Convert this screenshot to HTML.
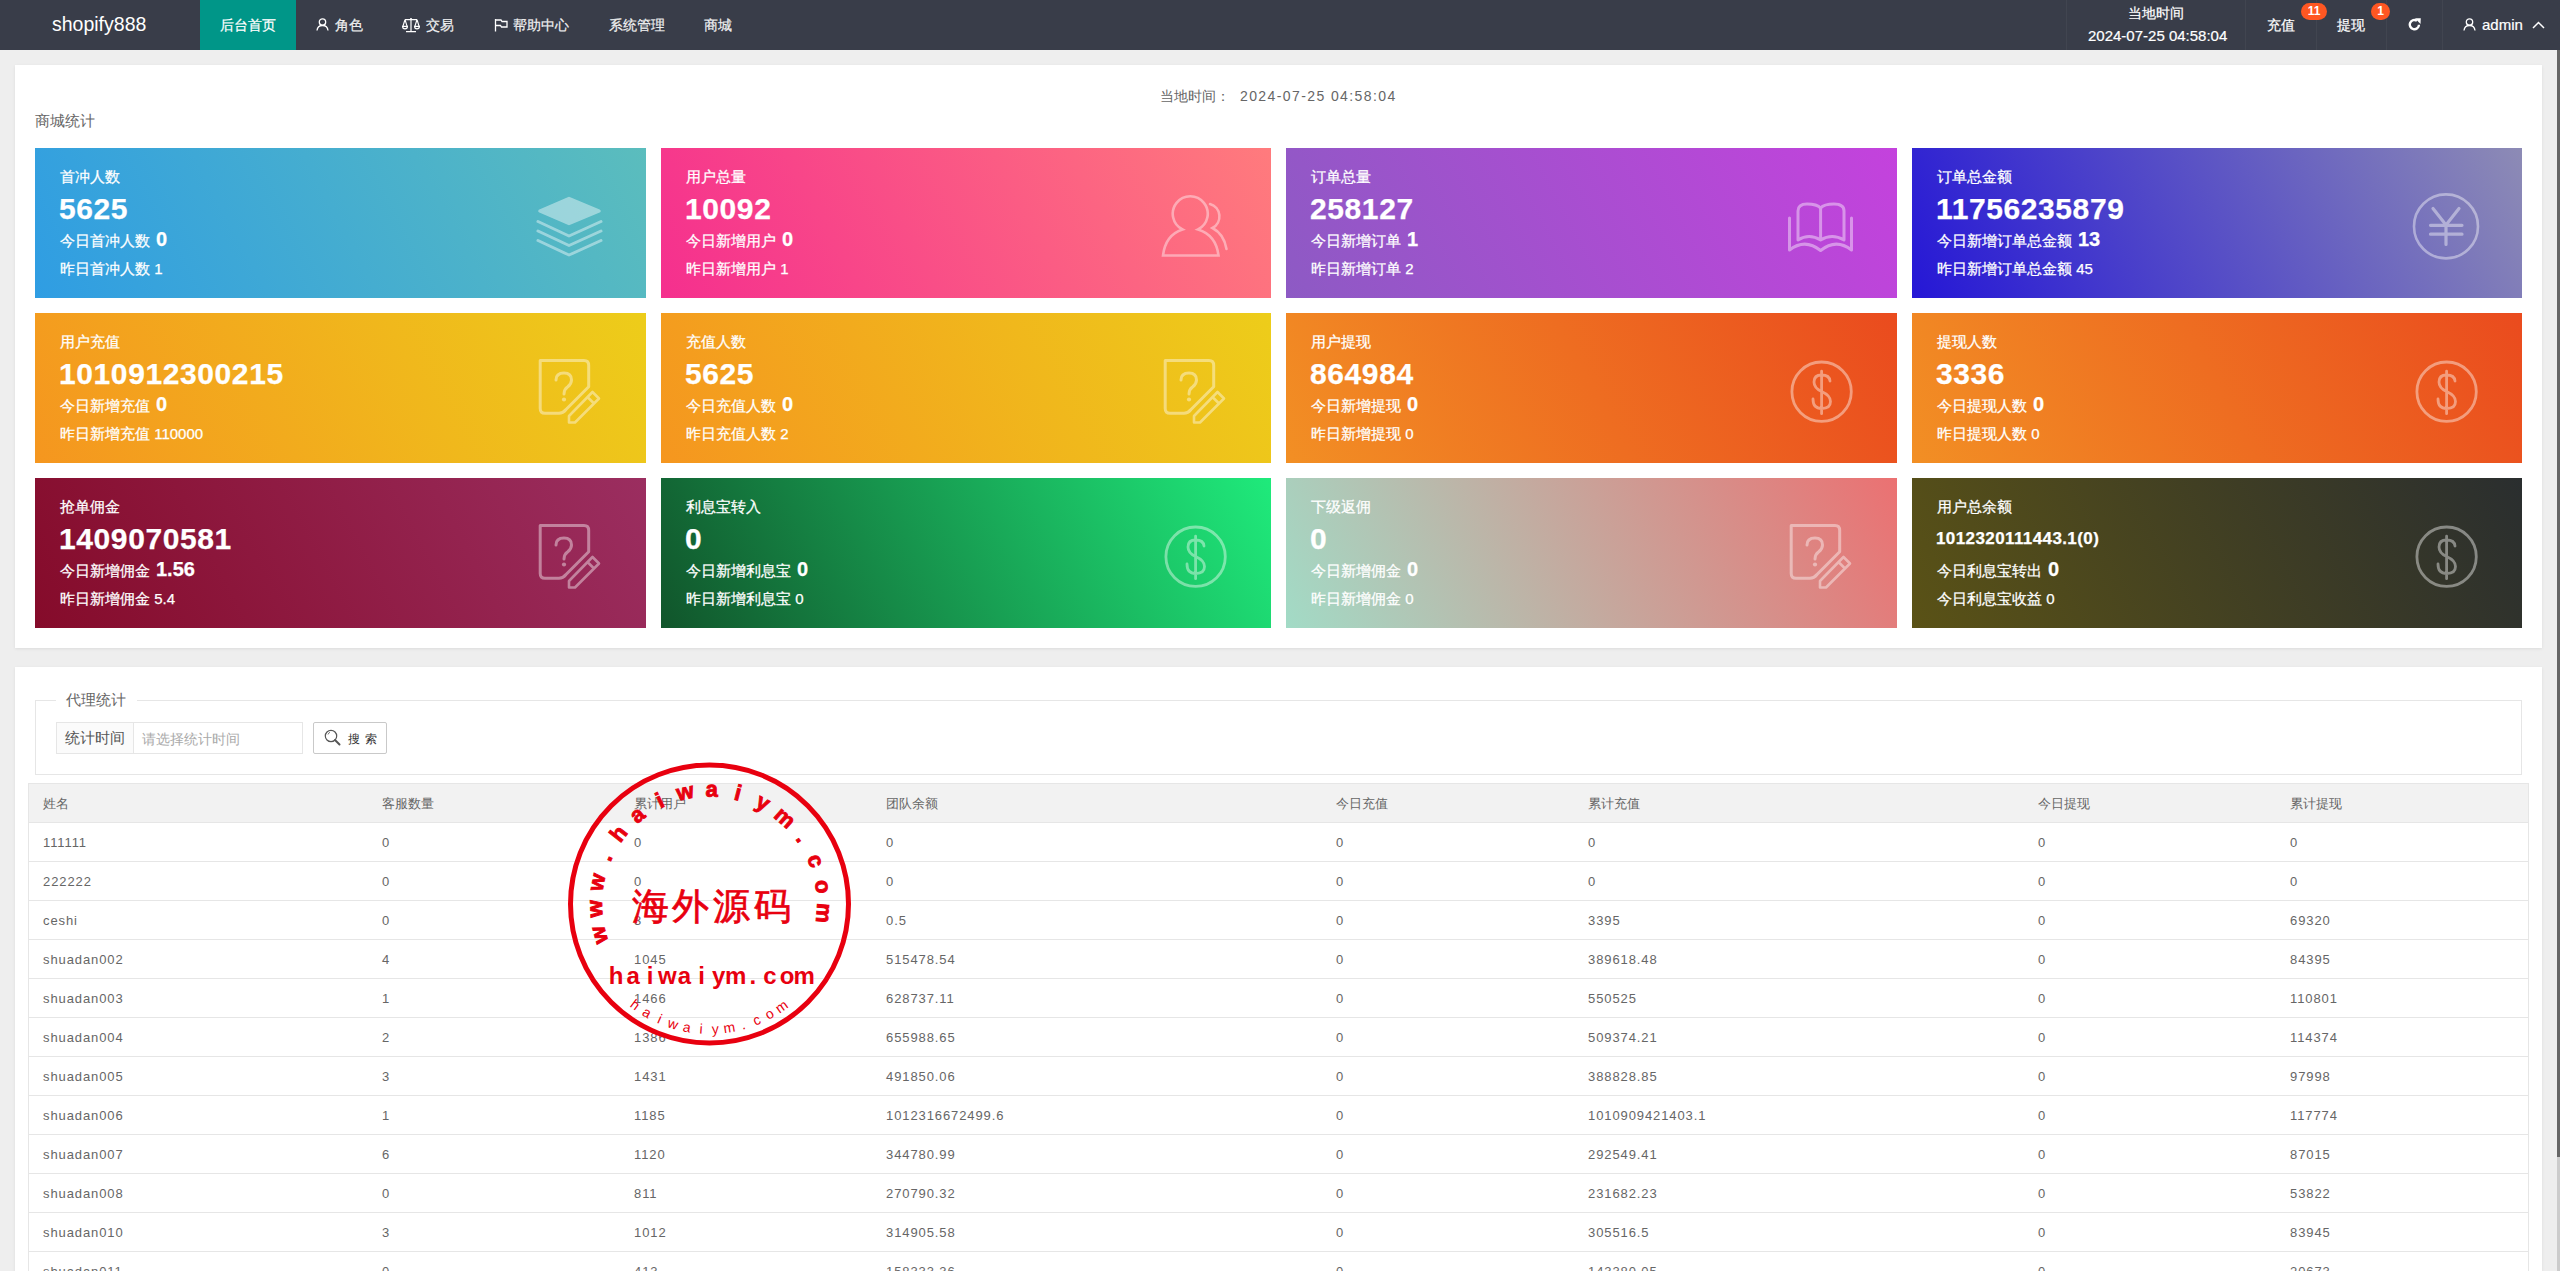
<!DOCTYPE html><html><head><meta charset='utf-8'><style>
*{box-sizing:border-box;margin:0;padding:0}
html,body{width:2560px;height:1271px;overflow:hidden}
body{background:#eeeeee;font-family:'Liberation Sans', sans-serif;font-size:14px;color:#666;position:relative}
.hdr{position:absolute;left:0;top:0;width:2560px;height:50px;background:#393d49;color:#fff;z-index:5;-webkit-text-stroke:0.2px #fff}
.logo{position:absolute;left:52px;top:11px;font-size:19.5px;line-height:26px;color:#fff;-webkit-text-stroke:0}
.nav{position:absolute;top:0;height:50px;line-height:50px;color:rgba(255,255,255,.9);white-space:nowrap}
.nav.on{background:#009688;color:#fff}
.sep{position:absolute;top:0;width:1px;height:50px;background:rgba(255,255,255,.045)}
.ab{position:absolute;white-space:nowrap}
.badge{position:absolute;height:17px;border-radius:9px;background:#ff5722;color:#fff;font-size:12px;font-weight:bold;line-height:17px;text-align:center;-webkit-text-stroke:0}
.panel{position:absolute;background:#fff;box-shadow:0 1px 3px rgba(0,0,0,.08)}
.card{position:absolute;width:611px;height:150px;color:#fff;overflow:hidden;-webkit-text-stroke:0.25px #fff}
.card .t{position:absolute;left:25px;top:19px;line-height:20px;font-size:15px}
.card .n{position:absolute;left:24px;top:41px;line-height:40px;font-size:30px;font-weight:bold;letter-spacing:0.6px}
.card .d{position:absolute;left:25px;top:78px;line-height:26px;font-size:15px}
.card .d b{font-size:20px;margin-left:6px}
.card .y{position:absolute;left:25px;top:111px;line-height:20px;font-size:15px}
.card svg{position:absolute}
.tbl{position:absolute;left:28px;top:783px;width:2502px;border-collapse:collapse}
.row{position:absolute;left:28px;width:2501px;height:39px;border:1px solid #e6e6e6;border-top:none;background:#fff}
.row.h{background:#f2f2f2;border-top:1px solid #e6e6e6}
.c{position:absolute;top:1px;line-height:38px;font-size:13px;color:#666;letter-spacing:0.9px;white-space:nowrap}
.row.h .c{letter-spacing:0;top:1px;font-size:13px}
</style></head><body>
<div class='hdr'>
<div class='logo'>shopify888</div>
<div class='nav on' style='left:200px;width:96px;text-align:center'>后台首页</div>
<svg width='13' height='13' viewBox='0 0 13 13' style='position:absolute;left:316px;top:18px'><circle cx='6.5' cy='4' r='3.2' fill='none' stroke='#fff' stroke-width='1.3'/><path d='M1 12.5 Q1.5 7.5 6.5 7.5 Q11.5 7.5 12 12.5' fill='none' stroke='#fff' stroke-width='1.3'/></svg>
<div class='nav' style='left:335px'>角色</div>
<svg width='18' height='15' viewBox='0 0 18 15' style='position:absolute;left:402px;top:18px'><g fill='none' stroke='#fff' stroke-width='1.2'><path d='M3 1.6H15M9 1.6V13.6M4 13.6H14M3 1.6L0.9 8.4M3 1.6L5.1 8.4M15 1.6L12.9 8.4M15 1.6L17.1 8.4'/><path d='M0.6 8.4H5.4A2.4 2.4 0 0 1 0.6 8.4ZM12.6 8.4H17.4A2.4 2.4 0 0 1 12.6 8.4Z'/></g><circle cx='9' cy='1.2' r='1.1' fill='#fff'/></svg>
<div class='nav' style='left:426px'>交易</div>
<svg width='14' height='14' viewBox='0 0 14 14' style='position:absolute;left:494px;top:18px'><path d='M1.5 1V13.5M1.5 2H7L8 3.5H13V9H7.5L6.5 7.5H1.5' fill='none' stroke='#fff' stroke-width='1.3'/></svg>
<div class='nav' style='left:513px'>帮助中心</div>
<div class='nav' style='left:609px'>系统管理</div>
<div class='nav' style='left:704px'>商城</div>
<div class='sep' style='left:2066px'></div>
<div class='sep' style='left:2245px'></div>
<div class='sep' style='left:2316px'></div>
<div class='sep' style='left:2386px'></div>
<div class='sep' style='left:2442px'></div>
<div class='ab' style='left:2128px;top:3px;line-height:20px;font-size:14px'>当地时间</div>
<div class='ab' style='left:2088px;top:26px;line-height:20px;font-size:15px'>2024-07-25 04:58:04</div>
<div class='ab' style='left:2267px;top:15px;line-height:20px'>充值</div>
<div class='badge' style='left:2301px;top:3px;width:26px'>11</div>
<div class='ab' style='left:2337px;top:15px;line-height:20px'>提现</div>
<div class='badge' style='left:2371px;top:3px;width:19px'>1</div>
<svg width='13' height='13' viewBox='0 0 13 13' style='position:absolute;left:2408px;top:18px'><path d='M11 6.8A4.6 4.6 0 1 1 9 2.8' fill='none' stroke='#fff' stroke-width='2.4'/><path d='M7 0.3L12.8 0.3L12.5 6Z' fill='#fff'/></svg>
<svg width='13' height='13' viewBox='0 0 13 13' style='position:absolute;left:2463px;top:18px'><circle cx='6.5' cy='4' r='3.2' fill='none' stroke='#fff' stroke-width='1.3'/><path d='M1 12.5 Q1.5 7.5 6.5 7.5 Q11.5 7.5 12 12.5' fill='none' stroke='#fff' stroke-width='1.3'/></svg>
<div class='ab' style='left:2482px;top:15px;line-height:20px;font-size:15px'>admin</div>
<svg width='13' height='8' viewBox='0 0 13 8' style='position:absolute;left:2532px;top:21px'><path d='M1 7L6.5 1.5L12 7' fill='none' stroke='#fff' stroke-width='1.5'/></svg>
</div>
<div class='ab' style='left:2557px;top:50px;width:3px;height:1107px;background:#666'></div>
<div class='ab' style='left:2557px;top:1157px;width:3px;height:114px;background:#ccc'></div>
<div class='panel' style='left:15px;top:65px;width:2527px;height:583px'></div>
<div class='ab' style='left:1160px;top:86px;line-height:20px;font-size:14px;color:#666'>当地时间：<span style='margin-left:10px;letter-spacing:1.4px'>2024-07-25 04:58:04</span></div>
<div class='ab' style='left:35px;top:111px;line-height:20px;font-size:15px;color:#666'>商城统计</div>
<div class='card' style='left:35px;top:148px;width:611px;background:linear-gradient(62deg,#2f9de3,#5bbdbd)'>
<div class='t'>首冲人数</div>
<div class='n'>5625</div>
<div class='d'>今日首冲人数<b>0</b></div>
<div class='y'>昨日首冲人数 1</div>
<svg width='100' height='90' viewBox='0 0 100 90' style='right:26px;top:32px'><g opacity='.42'><path d='M20 31 L49 18.5 L79 31 L49 43.5 Z' fill='#fff' stroke='#fff' stroke-width='3.5' stroke-linejoin='round'/><path d='M18 41.5 L49 56 L81 41.5M18 51 L49 65.5 L81 51M18 60.5 L49 75 L81 60.5' fill='none' stroke='#fff' stroke-width='3' stroke-linecap='round' stroke-linejoin='round'/></g></svg>
</div>
<div class='card' style='left:661px;top:148px;width:610px;background:linear-gradient(62deg,#f52f8e,#ff7b7d)'>
<div class='t'>用户总量</div>
<div class='n'>10092</div>
<div class='d'>今日新增用户<b>0</b></div>
<div class='y'>昨日新增用户 1</div>
<svg width='100' height='90' viewBox='0 0 100 90' style='right:21px;top:32px'><g opacity='.42'><path d='M32.5 49.5 A17.5 17.5 0 1 1 48 49.5 Q66 55 68.5 75.5 H13 Q15.5 55 32.5 49.5 Z' fill='none' stroke='#fff' stroke-width='2.6' stroke-linejoin='miter'/><path d='M60 24 A13 13 0 0 1 62.5 48 Q74 54 76.5 69' fill='none' stroke='#fff' stroke-width='2.6' stroke-linecap='round'/></g></svg>
</div>
<div class='card' style='left:1286px;top:148px;width:611px;background:linear-gradient(62deg,#8d5ac4,#c442dd)'>
<div class='t'>订单总量</div>
<div class='n'>258127</div>
<div class='d'>今日新增订单<b>1</b></div>
<div class='y'>昨日新增订单 2</div>
<svg width='100' height='90' viewBox='0 0 100 90' style='right:27px;top:32px'><g opacity='.42'><path d='M19.5 38V70Q35 58 50.6 70.5Q66 58 81.5 70V38' fill='none' stroke='#fff' stroke-width='3' stroke-linecap='round' stroke-linejoin='round'/><path d='M28 60V31Q28 24 37 24Q47 24 50.6 28Q54 24 64 24Q74 24 74 31V60Q62 53 50.6 60Q39 53 28 60ZM50.6 28V60' fill='none' stroke='#fff' stroke-width='3' stroke-linecap='round' stroke-linejoin='round'/></g></svg>
</div>
<div class='card' style='left:1912px;top:148px;width:610px;background:linear-gradient(62deg,#2517d6,#8d8bb5)'>
<div class='t'>订单总金额</div>
<div class='n'>11756235879</div>
<div class='d'>今日新增订单总金额<b>13</b></div>
<div class='y'>昨日新增订单总金额 45</div>
<svg width='100' height='90' viewBox='0 0 100 90' style='right:26px;top:32px'><g opacity='.42'><circle cx='50' cy='46.4' r='32' fill='none' stroke='#fff' stroke-width='2.6'/><path d='M37 28.5L50 45L63 28.5M50 45V64.5M34.5 45.3H66M34.5 54.2H66' fill='none' stroke='#fff' stroke-width='3.2' stroke-linecap='round'/></g></svg>
</div>
<div class='card' style='left:35px;top:313px;width:611px;background:linear-gradient(62deg,#f5961f,#edcd1a)'>
<div class='t'>用户充值</div>
<div class='n'>1010912300215</div>
<div class='d'>今日新增充值<b>0</b></div>
<div class='y'>昨日新增充值 110000</div>
<svg width='100' height='90' viewBox='0 0 100 90' style='right:26px;top:32px'><g opacity='.42'><path d='M20.2 15.6H64Q68.7 15.6 68.7 20.5V41.8L46 64.5Q43 68.3 39 68.3H25Q20.2 68.3 20.2 63.5Z' fill='none' stroke='#fff' stroke-width='3' stroke-linejoin='round'/><path d='M36 35Q36 28 44 28Q51.5 28 51.5 35Q51.5 39 47.5 42Q44 44.5 44 49' fill='none' stroke='#fff' stroke-width='3' stroke-linecap='round'/><circle cx='44' cy='54.5' r='2.1' fill='#fff'/><path d='M72.5 47L79 53.5L55 77.5L49 77.5L49 71ZM67.5 52L74 58.5' fill='none' stroke='#fff' stroke-width='2.6' stroke-linejoin='round'/></g></svg>
</div>
<div class='card' style='left:661px;top:313px;width:610px;background:linear-gradient(62deg,#f5961f,#edcd1a)'>
<div class='t'>充值人数</div>
<div class='n'>5625</div>
<div class='d'>今日充值人数<b>0</b></div>
<div class='y'>昨日充值人数 2</div>
<svg width='100' height='90' viewBox='0 0 100 90' style='right:26px;top:32px'><g opacity='.42'><path d='M20.2 15.6H64Q68.7 15.6 68.7 20.5V41.8L46 64.5Q43 68.3 39 68.3H25Q20.2 68.3 20.2 63.5Z' fill='none' stroke='#fff' stroke-width='3' stroke-linejoin='round'/><path d='M36 35Q36 28 44 28Q51.5 28 51.5 35Q51.5 39 47.5 42Q44 44.5 44 49' fill='none' stroke='#fff' stroke-width='3' stroke-linecap='round'/><circle cx='44' cy='54.5' r='2.1' fill='#fff'/><path d='M72.5 47L79 53.5L55 77.5L49 77.5L49 71ZM67.5 52L74 58.5' fill='none' stroke='#fff' stroke-width='2.6' stroke-linejoin='round'/></g></svg>
</div>
<div class='card' style='left:1286px;top:313px;width:611px;background:linear-gradient(62deg,#f28f24,#ea4b1e)'>
<div class='t'>用户提现</div>
<div class='n'>864984</div>
<div class='d'>今日新增提现<b>0</b></div>
<div class='y'>昨日新增提现 0</div>
<svg width='100' height='90' viewBox='0 0 100 90' style='right:26px;top:32px'><g opacity='.42'><circle cx='50.6' cy='46.7' r='29.7' fill='none' stroke='#fff' stroke-width='2.8'/><path d='M59 36Q58.5 30 50.6 30Q43 30 43 37Q43 43 50.6 46.5Q59.5 50.5 59.5 56.5Q59.5 63.5 50.6 63.5Q42 63.5 42 54M50.6 26.2V68.7' fill='none' stroke='#fff' stroke-width='2.8' stroke-linecap='round'/></g></svg>
</div>
<div class='card' style='left:1912px;top:313px;width:610px;background:linear-gradient(62deg,#f28f24,#ea4b1e)'>
<div class='t'>提现人数</div>
<div class='n'>3336</div>
<div class='d'>今日提现人数<b>0</b></div>
<div class='y'>昨日提现人数 0</div>
<svg width='100' height='90' viewBox='0 0 100 90' style='right:26px;top:32px'><g opacity='.42'><circle cx='50.6' cy='46.7' r='29.7' fill='none' stroke='#fff' stroke-width='2.8'/><path d='M59 36Q58.5 30 50.6 30Q43 30 43 37Q43 43 50.6 46.5Q59.5 50.5 59.5 56.5Q59.5 63.5 50.6 63.5Q42 63.5 42 54M50.6 26.2V68.7' fill='none' stroke='#fff' stroke-width='2.8' stroke-linecap='round'/></g></svg>
</div>
<div class='card' style='left:35px;top:478px;width:611px;background:linear-gradient(62deg,#850b2a,#9b2e60)'>
<div class='t'>抢单佣金</div>
<div class='n'>1409070581</div>
<div class='d'>今日新增佣金<b>1.56</b></div>
<div class='y'>昨日新增佣金 5.4</div>
<svg width='100' height='90' viewBox='0 0 100 90' style='right:26px;top:32px'><g opacity='.42'><path d='M20.2 15.6H64Q68.7 15.6 68.7 20.5V41.8L46 64.5Q43 68.3 39 68.3H25Q20.2 68.3 20.2 63.5Z' fill='none' stroke='#fff' stroke-width='3' stroke-linejoin='round'/><path d='M36 35Q36 28 44 28Q51.5 28 51.5 35Q51.5 39 47.5 42Q44 44.5 44 49' fill='none' stroke='#fff' stroke-width='3' stroke-linecap='round'/><circle cx='44' cy='54.5' r='2.1' fill='#fff'/><path d='M72.5 47L79 53.5L55 77.5L49 77.5L49 71ZM67.5 52L74 58.5' fill='none' stroke='#fff' stroke-width='2.6' stroke-linejoin='round'/></g></svg>
</div>
<div class='card' style='left:661px;top:478px;width:610px;background:linear-gradient(62deg,#11552b,#1fea7b)'>
<div class='t'>利息宝转入</div>
<div class='n'>0</div>
<div class='d'>今日新增利息宝<b>0</b></div>
<div class='y'>昨日新增利息宝 0</div>
<svg width='100' height='90' viewBox='0 0 100 90' style='right:26px;top:32px'><g opacity='.42'><circle cx='50.6' cy='46.7' r='29.7' fill='none' stroke='#fff' stroke-width='2.8'/><path d='M59 36Q58.5 30 50.6 30Q43 30 43 37Q43 43 50.6 46.5Q59.5 50.5 59.5 56.5Q59.5 63.5 50.6 63.5Q42 63.5 42 54M50.6 26.2V68.7' fill='none' stroke='#fff' stroke-width='2.8' stroke-linecap='round'/></g></svg>
</div>
<div class='card' style='left:1286px;top:478px;width:611px;background:linear-gradient(62deg,#a2dbc6,#eb7172)'>
<div class='t'>下级返佣</div>
<div class='n'>0</div>
<div class='d'>今日新增佣金<b>0</b></div>
<div class='y'>昨日新增佣金 0</div>
<svg width='100' height='90' viewBox='0 0 100 90' style='right:26px;top:32px'><g opacity='.42'><path d='M20.2 15.6H64Q68.7 15.6 68.7 20.5V41.8L46 64.5Q43 68.3 39 68.3H25Q20.2 68.3 20.2 63.5Z' fill='none' stroke='#fff' stroke-width='3' stroke-linejoin='round'/><path d='M36 35Q36 28 44 28Q51.5 28 51.5 35Q51.5 39 47.5 42Q44 44.5 44 49' fill='none' stroke='#fff' stroke-width='3' stroke-linecap='round'/><circle cx='44' cy='54.5' r='2.1' fill='#fff'/><path d='M72.5 47L79 53.5L55 77.5L49 77.5L49 71ZM67.5 52L74 58.5' fill='none' stroke='#fff' stroke-width='2.6' stroke-linejoin='round'/></g></svg>
</div>
<div class='card' style='left:1912px;top:478px;width:610px;background:linear-gradient(62deg,#5a5216,#2a2e2f)'>
<div class='t'>用户总余额</div>
<div class='n' style='font-size:17px;letter-spacing:0.4px'>1012320111443.1(0)</div>
<div class='d'>今日利息宝转出<b>0</b></div>
<div class='y'>今日利息宝收益 0</div>
<svg width='100' height='90' viewBox='0 0 100 90' style='right:26px;top:32px'><g opacity='.42'><circle cx='50.6' cy='46.7' r='29.7' fill='none' stroke='#fff' stroke-width='2.8'/><path d='M59 36Q58.5 30 50.6 30Q43 30 43 37Q43 43 50.6 46.5Q59.5 50.5 59.5 56.5Q59.5 63.5 50.6 63.5Q42 63.5 42 54M50.6 26.2V68.7' fill='none' stroke='#fff' stroke-width='2.8' stroke-linecap='round'/></g></svg>
</div>
<div class='panel' style='left:15px;top:667px;width:2527px;height:700px'></div>
<div class='ab' style='left:35px;top:700px;width:2487px;height:75px;border:1px solid #e6e6e6;border-left:1px solid #e6e6e6'></div>
<div class='ab' style='left:56px;top:690px;width:81px;height:20px;background:#fff'></div>
<div class='ab' style='left:66px;top:690px;line-height:20px;font-size:15px;color:#666'>代理统计</div>
<div class='ab' style='left:56px;top:722px;width:247px;height:32px;border:1px solid #e6e6e6;background:#fff'></div>
<div class='ab' style='left:56px;top:722px;width:78px;height:32px;border:1px solid #e6e6e6;background:#fbfbfb;line-height:30px;padding-left:8px;color:#555;font-size:15px'>统计时间</div>
<div class='ab' style='left:142px;top:723px;line-height:32px;color:#aaa;font-size:14px'>请选择统计时间</div>
<div class='ab' style='left:313px;top:722px;width:74px;height:32px;border:1px solid #c9c9c9;border-radius:2px;background:#fff'></div>
<svg width='18' height='18' viewBox='0 0 18 18' style='position:absolute;left:324px;top:729px'><circle cx='7' cy='7' r='5.7' fill='none' stroke='#555' stroke-width='1.2'/><path d='M11 11L15.5 15.5' stroke='#555' stroke-width='2' stroke-linecap='round'/><path d='M4 5.5Q4.5 3.8 6 3.3' fill='none' stroke='#555' stroke-width='0.8'/></svg>
<div class='ab' style='left:348px;top:729px;line-height:20px;font-size:12px;color:#333;letter-spacing:4.5px'>搜索</div>
<div class='row h' style='top:783px;height:40px'><div class='c' style='left:14px'>姓名</div><div class='c' style='left:353px'>客服数量</div><div class='c' style='left:605px'>累计用户</div><div class='c' style='left:857px'>团队余额</div><div class='c' style='left:1307px'>今日充值</div><div class='c' style='left:1559px'>累计充值</div><div class='c' style='left:2009px'>今日提现</div><div class='c' style='left:2261px'>累计提现</div></div>
<div class='row' style='top:823px'><div class='c' style='left:14px'>111111</div><div class='c' style='left:353px'>0</div><div class='c' style='left:605px'>0</div><div class='c' style='left:857px'>0</div><div class='c' style='left:1307px'>0</div><div class='c' style='left:1559px'>0</div><div class='c' style='left:2009px'>0</div><div class='c' style='left:2261px'>0</div></div>
<div class='row' style='top:862px'><div class='c' style='left:14px'>222222</div><div class='c' style='left:353px'>0</div><div class='c' style='left:605px'>0</div><div class='c' style='left:857px'>0</div><div class='c' style='left:1307px'>0</div><div class='c' style='left:1559px'>0</div><div class='c' style='left:2009px'>0</div><div class='c' style='left:2261px'>0</div></div>
<div class='row' style='top:901px'><div class='c' style='left:14px'>ceshi</div><div class='c' style='left:353px'>0</div><div class='c' style='left:605px'>3</div><div class='c' style='left:857px'>0.5</div><div class='c' style='left:1307px'>0</div><div class='c' style='left:1559px'>3395</div><div class='c' style='left:2009px'>0</div><div class='c' style='left:2261px'>69320</div></div>
<div class='row' style='top:940px'><div class='c' style='left:14px'>shuadan002</div><div class='c' style='left:353px'>4</div><div class='c' style='left:605px'>1045</div><div class='c' style='left:857px'>515478.54</div><div class='c' style='left:1307px'>0</div><div class='c' style='left:1559px'>389618.48</div><div class='c' style='left:2009px'>0</div><div class='c' style='left:2261px'>84395</div></div>
<div class='row' style='top:979px'><div class='c' style='left:14px'>shuadan003</div><div class='c' style='left:353px'>1</div><div class='c' style='left:605px'>1466</div><div class='c' style='left:857px'>628737.11</div><div class='c' style='left:1307px'>0</div><div class='c' style='left:1559px'>550525</div><div class='c' style='left:2009px'>0</div><div class='c' style='left:2261px'>110801</div></div>
<div class='row' style='top:1018px'><div class='c' style='left:14px'>shuadan004</div><div class='c' style='left:353px'>2</div><div class='c' style='left:605px'>1386</div><div class='c' style='left:857px'>655988.65</div><div class='c' style='left:1307px'>0</div><div class='c' style='left:1559px'>509374.21</div><div class='c' style='left:2009px'>0</div><div class='c' style='left:2261px'>114374</div></div>
<div class='row' style='top:1057px'><div class='c' style='left:14px'>shuadan005</div><div class='c' style='left:353px'>3</div><div class='c' style='left:605px'>1431</div><div class='c' style='left:857px'>491850.06</div><div class='c' style='left:1307px'>0</div><div class='c' style='left:1559px'>388828.85</div><div class='c' style='left:2009px'>0</div><div class='c' style='left:2261px'>97998</div></div>
<div class='row' style='top:1096px'><div class='c' style='left:14px'>shuadan006</div><div class='c' style='left:353px'>1</div><div class='c' style='left:605px'>1185</div><div class='c' style='left:857px'>1012316672499.6</div><div class='c' style='left:1307px'>0</div><div class='c' style='left:1559px'>1010909421403.1</div><div class='c' style='left:2009px'>0</div><div class='c' style='left:2261px'>117774</div></div>
<div class='row' style='top:1135px'><div class='c' style='left:14px'>shuadan007</div><div class='c' style='left:353px'>6</div><div class='c' style='left:605px'>1120</div><div class='c' style='left:857px'>344780.99</div><div class='c' style='left:1307px'>0</div><div class='c' style='left:1559px'>292549.41</div><div class='c' style='left:2009px'>0</div><div class='c' style='left:2261px'>87015</div></div>
<div class='row' style='top:1174px'><div class='c' style='left:14px'>shuadan008</div><div class='c' style='left:353px'>0</div><div class='c' style='left:605px'>811</div><div class='c' style='left:857px'>270790.32</div><div class='c' style='left:1307px'>0</div><div class='c' style='left:1559px'>231682.23</div><div class='c' style='left:2009px'>0</div><div class='c' style='left:2261px'>53822</div></div>
<div class='row' style='top:1213px'><div class='c' style='left:14px'>shuadan010</div><div class='c' style='left:353px'>3</div><div class='c' style='left:605px'>1012</div><div class='c' style='left:857px'>314905.58</div><div class='c' style='left:1307px'>0</div><div class='c' style='left:1559px'>305516.5</div><div class='c' style='left:2009px'>0</div><div class='c' style='left:2261px'>83945</div></div>
<div class='row' style='top:1252px'><div class='c' style='left:14px'>shuadan011</div><div class='c' style='left:353px'>0</div><div class='c' style='left:605px'>413</div><div class='c' style='left:857px'>158333.36</div><div class='c' style='left:1307px'>0</div><div class='c' style='left:1559px'>143380.05</div><div class='c' style='left:2009px'>0</div><div class='c' style='left:2261px'>20673</div></div>
<svg width='2560' height='1271' viewBox='0 0 2560 1271' style='position:absolute;left:0;top:0;z-index:3;pointer-events:none'><circle cx='709.5' cy='904' r='139' fill='none' stroke='#e8000f' stroke-width='5'/><text x='606.0' y='933.1' transform='rotate(-105.70 606.0 933.1)' text-anchor='middle' font-family='Liberation Sans' font-weight='bold' font-size='22' fill='#e8000f' stroke='#e8000f' stroke-width='0.9'>w</text><text x='602.1' y='908.4' transform='rotate(-92.35 602.1 908.4)' text-anchor='middle' font-family='Liberation Sans' font-weight='bold' font-size='22' fill='#e8000f' stroke='#e8000f' stroke-width='0.9'>w</text><text x='604.0' y='883.5' transform='rotate(-79.00 604.0 883.5)' text-anchor='middle' font-family='Liberation Sans' font-weight='bold' font-size='22' fill='#e8000f' stroke='#e8000f' stroke-width='0.9'>w</text><text x='611.6' y='859.7' transform='rotate(-65.65 611.6 859.7)' text-anchor='middle' font-family='Liberation Sans' font-weight='bold' font-size='22' fill='#e8000f' stroke='#e8000f' stroke-width='0.9'>.</text><text x='624.4' y='838.3' transform='rotate(-52.30 624.4 838.3)' text-anchor='middle' font-family='Liberation Sans' font-weight='bold' font-size='22' fill='#e8000f' stroke='#e8000f' stroke-width='0.9'>h</text><text x='641.9' y='820.4' transform='rotate(-38.95 641.9 820.4)' text-anchor='middle' font-family='Liberation Sans' font-weight='bold' font-size='22' fill='#e8000f' stroke='#e8000f' stroke-width='0.9'>a</text><text x='663.1' y='807.1' transform='rotate(-25.60 663.1 807.1)' text-anchor='middle' font-family='Liberation Sans' font-weight='bold' font-size='22' fill='#e8000f' stroke='#e8000f' stroke-width='0.9'>i</text><text x='686.7' y='798.9' transform='rotate(-12.25 686.7 798.9)' text-anchor='middle' font-family='Liberation Sans' font-weight='bold' font-size='22' fill='#e8000f' stroke='#e8000f' stroke-width='0.9'>w</text><text x='711.6' y='796.5' transform='rotate(1.10 711.6 796.5)' text-anchor='middle' font-family='Liberation Sans' font-weight='bold' font-size='22' fill='#e8000f' stroke='#e8000f' stroke-width='0.9'>a</text><text x='736.3' y='799.9' transform='rotate(14.45 736.3 799.9)' text-anchor='middle' font-family='Liberation Sans' font-weight='bold' font-size='22' fill='#e8000f' stroke='#e8000f' stroke-width='0.9'>i</text><text x='759.6' y='808.9' transform='rotate(27.80 759.6 808.9)' text-anchor='middle' font-family='Liberation Sans' font-weight='bold' font-size='22' fill='#e8000f' stroke='#e8000f' stroke-width='0.9'>y</text><text x='780.2' y='823.1' transform='rotate(41.15 780.2 823.1)' text-anchor='middle' font-family='Liberation Sans' font-weight='bold' font-size='22' fill='#e8000f' stroke='#e8000f' stroke-width='0.9'>m</text><text x='797.0' y='841.6' transform='rotate(54.50 797.0 841.6)' text-anchor='middle' font-family='Liberation Sans' font-weight='bold' font-size='22' fill='#e8000f' stroke='#e8000f' stroke-width='0.9'>.</text><text x='809.1' y='863.5' transform='rotate(67.85 809.1 863.5)' text-anchor='middle' font-family='Liberation Sans' font-weight='bold' font-size='22' fill='#e8000f' stroke='#e8000f' stroke-width='0.9'>c</text><text x='815.7' y='887.6' transform='rotate(81.20 815.7 887.6)' text-anchor='middle' font-family='Liberation Sans' font-weight='bold' font-size='22' fill='#e8000f' stroke='#e8000f' stroke-width='0.9'>o</text><text x='816.7' y='912.5' transform='rotate(94.55 816.7 912.5)' text-anchor='middle' font-family='Liberation Sans' font-weight='bold' font-size='22' fill='#e8000f' stroke='#e8000f' stroke-width='0.9'>m</text><text x='632.4' y='1008.6' transform='rotate(36.40 632.4 1008.6)' text-anchor='middle' font-family='Liberation Sans' font-size='14' fill='#e8000f'>h</text><text x='644.7' y='1016.7' transform='rotate(29.90 644.7 1016.7)' text-anchor='middle' font-family='Liberation Sans' font-size='14' fill='#e8000f'>a</text><text x='657.9' y='1023.3' transform='rotate(23.40 657.9 1023.3)' text-anchor='middle' font-family='Liberation Sans' font-size='14' fill='#e8000f'>i</text><text x='671.7' y='1028.4' transform='rotate(16.90 671.7 1028.4)' text-anchor='middle' font-family='Liberation Sans' font-size='14' fill='#e8000f'>w</text><text x='686.0' y='1031.9' transform='rotate(10.40 686.0 1031.9)' text-anchor='middle' font-family='Liberation Sans' font-size='14' fill='#e8000f'>a</text><text x='700.7' y='1033.7' transform='rotate(3.90 700.7 1033.7)' text-anchor='middle' font-family='Liberation Sans' font-size='14' fill='#e8000f'>i</text><text x='715.4' y='1033.9' transform='rotate(-2.60 715.4 1033.9)' text-anchor='middle' font-family='Liberation Sans' font-size='14' fill='#e8000f'>y</text><text x='730.1' y='1032.4' transform='rotate(-9.10 730.1 1032.4)' text-anchor='middle' font-family='Liberation Sans' font-size='14' fill='#e8000f'>m</text><text x='744.5' y='1029.2' transform='rotate(-15.60 744.5 1029.2)' text-anchor='middle' font-family='Liberation Sans' font-size='14' fill='#e8000f'>.</text><text x='758.4' y='1024.4' transform='rotate(-22.10 758.4 1024.4)' text-anchor='middle' font-family='Liberation Sans' font-size='14' fill='#e8000f'>c</text><text x='771.7' y='1018.1' transform='rotate(-28.60 771.7 1018.1)' text-anchor='middle' font-family='Liberation Sans' font-size='14' fill='#e8000f'>o</text><text x='784.3' y='1010.4' transform='rotate(-35.10 784.3 1010.4)' text-anchor='middle' font-family='Liberation Sans' font-size='14' fill='#e8000f'>m</text><text x='713' y='919' text-anchor='middle' font-family="'Liberation Serif',serif" font-size='37' fill='#e8000f' stroke='#e8000f' stroke-width='0.7' letter-spacing='3.6'>海外源码</text><text x='616.0' y='984' text-anchor='middle' font-family='Liberation Sans' font-weight='bold' font-size='24' fill='#e8000f'>h</text><text x='633.1' y='984' text-anchor='middle' font-family='Liberation Sans' font-weight='bold' font-size='24' fill='#e8000f'>a</text><text x='650.2' y='984' text-anchor='middle' font-family='Liberation Sans' font-weight='bold' font-size='24' fill='#e8000f'>i</text><text x='667.3' y='984' text-anchor='middle' font-family='Liberation Sans' font-weight='bold' font-size='24' fill='#e8000f'>w</text><text x='684.4' y='984' text-anchor='middle' font-family='Liberation Sans' font-weight='bold' font-size='24' fill='#e8000f'>a</text><text x='701.5' y='984' text-anchor='middle' font-family='Liberation Sans' font-weight='bold' font-size='24' fill='#e8000f'>i</text><text x='718.6' y='984' text-anchor='middle' font-family='Liberation Sans' font-weight='bold' font-size='24' fill='#e8000f'>y</text><text x='735.7' y='984' text-anchor='middle' font-family='Liberation Sans' font-weight='bold' font-size='24' fill='#e8000f'>m</text><text x='752.8' y='984' text-anchor='middle' font-family='Liberation Sans' font-weight='bold' font-size='24' fill='#e8000f'>.</text><text x='769.9' y='984' text-anchor='middle' font-family='Liberation Sans' font-weight='bold' font-size='24' fill='#e8000f'>c</text><text x='787.0' y='984' text-anchor='middle' font-family='Liberation Sans' font-weight='bold' font-size='24' fill='#e8000f'>o</text><text x='804.1' y='984' text-anchor='middle' font-family='Liberation Sans' font-weight='bold' font-size='24' fill='#e8000f'>m</text></svg>
</body></html>
